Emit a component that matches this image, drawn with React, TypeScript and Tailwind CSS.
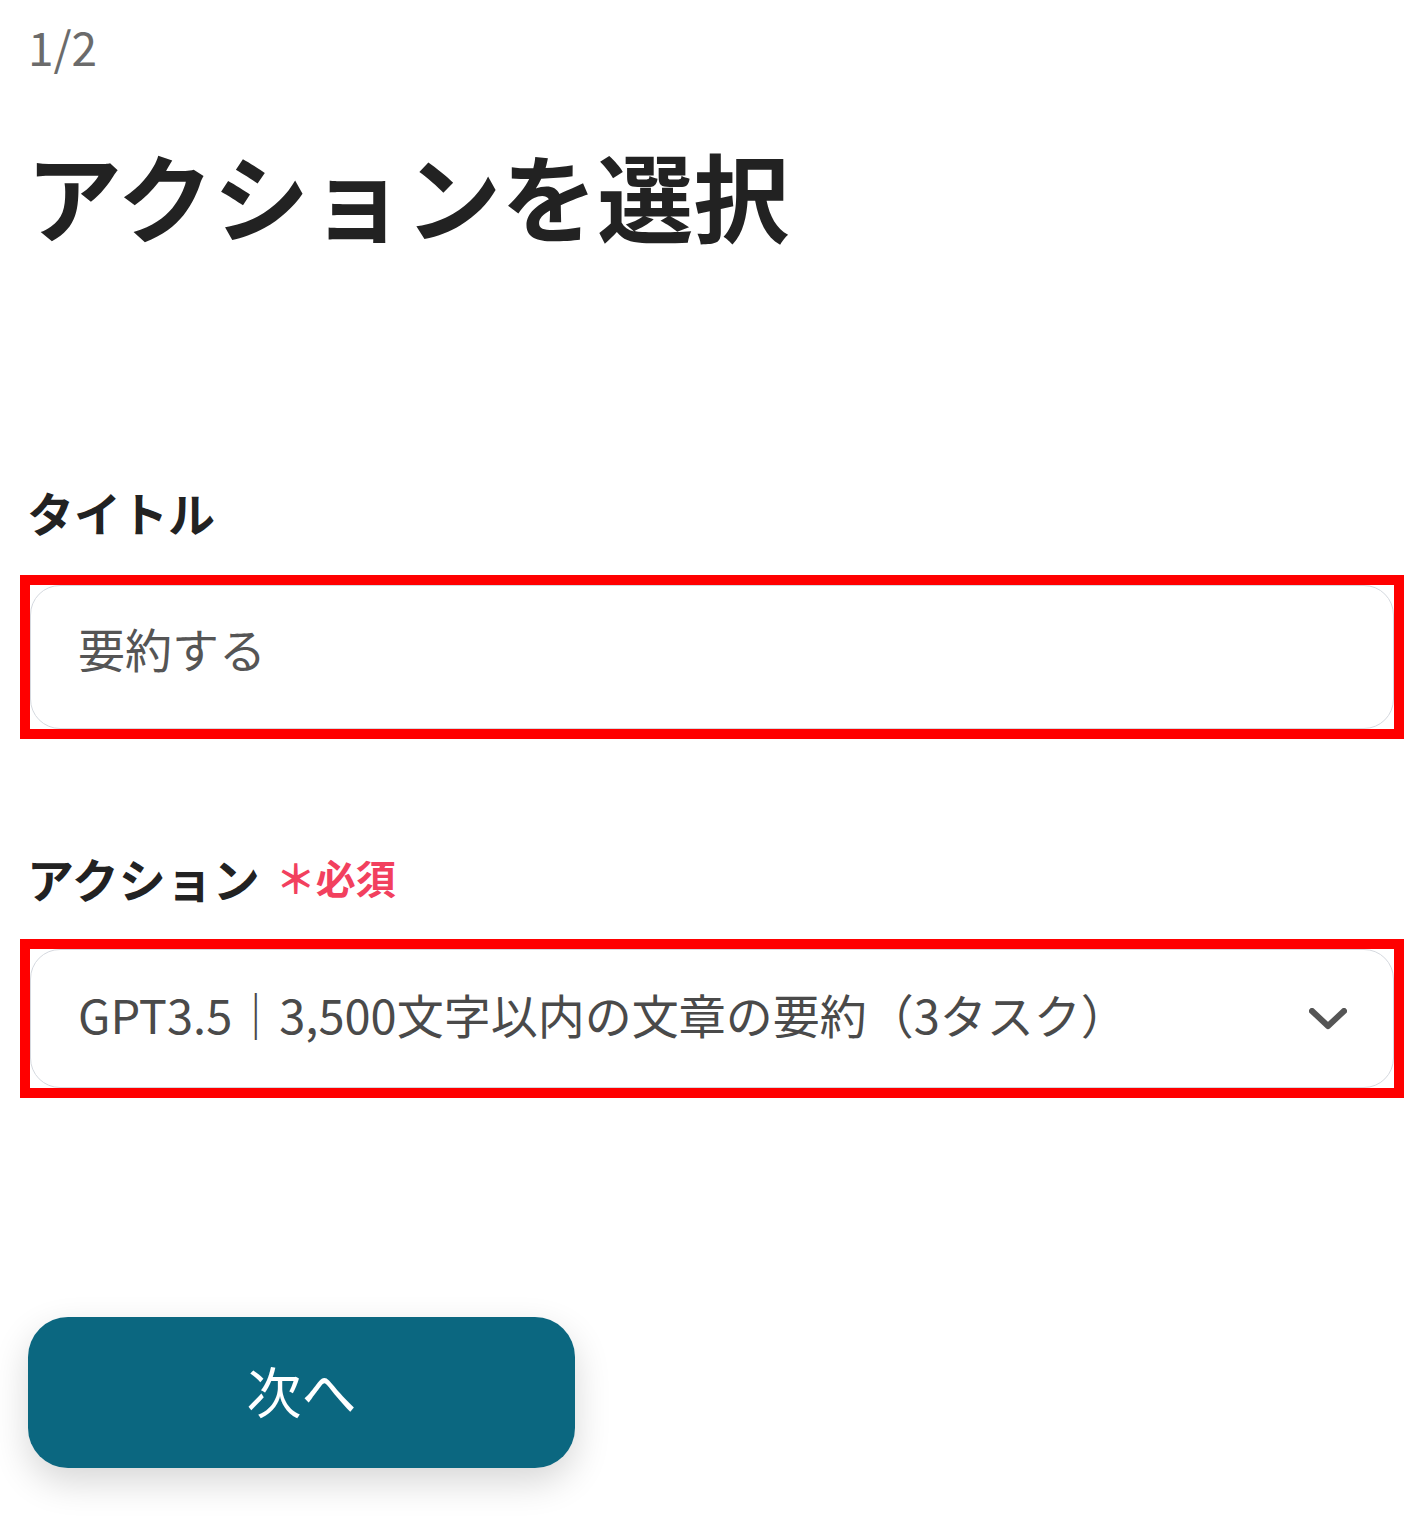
import React from "react";

export default function App() {
  return (
    <div
      className="w-[1419px] min-h-[1517px] bg-white"
      style={{ fontFamily: '"Noto Sans CJK JP", "Noto Sans", sans-serif' }}
    >
      <div className="flex flex-col">
        <div className="h-[98px] flex items-center pl-[28px] pb-[6px] text-[46px] leading-none text-[#6b6b6b]">
          1/2
        </div>
        <div className="h-[202px] flex items-center pl-[26px] pb-[10px] text-[96px] leading-none font-bold text-[#222222]">
          アクションを選択
        </div>
        <div className="mt-[180px] h-[68px] flex items-center pl-[27px] pb-[5px] text-[47px] leading-none font-bold text-[#222222]">
          タイトル
        </div>
        <div className="mt-[27px] ml-[20px] w-[1384px] h-[164px] border-[10px] border-[#ff0000] flex">
          <div className="flex-1 flex items-center rounded-[30px] border border-[#d5d9df] bg-white pl-[47px] pb-[20px] text-[47px] leading-none text-[#555555]">
            要約する
          </div>
        </div>
        <div className="mt-[107px] h-[68px] flex items-center pl-[27px] pb-[6px]">
          <span className="text-[47px] leading-none font-bold text-[#222222]">アクション</span>
          <span className="ml-[16px] text-[40px] leading-none font-bold text-[#f2405e]">＊必須</span>
        </div>
        <div className="mt-[25px] ml-[20px] w-[1384px] h-[159px] border-[10px] border-[#ff0000] flex">
          <div className="flex-1 flex items-center justify-between rounded-[30px] border border-[#d5d9df] bg-white pl-[47px] pr-[46px]">
            <span className="pb-[10px] text-[47px] leading-none text-[#4a4a4a] whitespace-nowrap">
              GPT3.5｜3,500文字以内の文章の要約（3タスク）
            </span>
            <svg width="38" height="22" viewBox="0 0 38 22" fill="none">
              <path d="M3 3 L19 18 L35 3" stroke="#555555" strokeWidth="6" strokeLinecap="round" strokeLinejoin="round" />
            </svg>
          </div>
        </div>
        <div className="mt-[219px] ml-[28px] w-[547px] h-[151px] rounded-[40px] bg-[#0b6780] flex items-center justify-center pb-[6px] text-[55px] leading-none text-white shadow-[0_14px_36px_rgba(0,0,0,0.16)]">
          次へ
        </div>
      </div>
    </div>
  );
}
